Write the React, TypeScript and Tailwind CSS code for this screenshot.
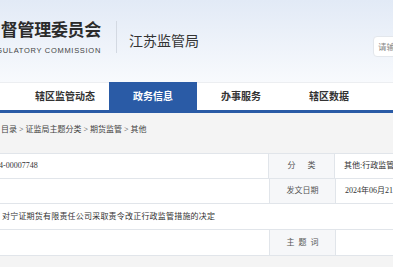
const cjk = "font-['Liberation_Serif','Noto_Sans_CJK_SC',serif]";

const navItems = [
  { label: '辖区监管动态', active: false },
  { label: '政务信息', active: true },
  { label: '办事服务', active: false },
  { label: '辖区数据', active: false },
];

export default function App() {
  return (
    <div className="w-[393px] h-[267px] overflow-hidden bg-[#f4f4f4] text-[#333] font-['Noto_Sans_CJK_SC',sans-serif]">
      {/* Header */}
      <div className="h-[82px] flex items-start bg-gradient-to-b from-[#e2eaf6] to-[#f8fafd] overflow-hidden">
        <div className="w-[101px] shrink-0 flex flex-col items-end pt-[19px]">
          <div className="text-[17px] leading-[20px] font-bold tracking-[-0.3px] whitespace-nowrap text-[#2b2b2b]">督管理委员会</div>
          <div className="mt-[8px] text-[7.5px] leading-[8px] tracking-[0.7px] whitespace-nowrap text-[#444] font-['Liberation_Sans',sans-serif]">REGULATORY COMMISSION</div>
        </div>
        <div className="ml-[15px] mt-[21px] w-px h-[32px] bg-[#d3d9e2] shrink-0" />
        <div className="ml-[12px] mt-[31px] text-[14px] leading-[18px] whitespace-nowrap text-[#333]">江苏监管局</div>
        <div className="ml-[174px] mt-[36px] h-[21px] w-[80px] shrink-0 rounded-[4px] border border-[#e3e7ec] bg-white pl-[4px] flex items-center text-[8.5px] text-[#888] whitespace-nowrap">
          请输入关键字
        </div>
      </div>

      {/* Nav */}
      <div className="h-[31px] bg-white border-t border-[#eceef1] border-b-[3px] border-b-[#2a5ba6] flex pl-[21px]">
        {navItems.map((item) => (
          <div
            key={item.label}
            className={
              item.active
                ? `w-[88px] -mt-px shrink-0 flex items-center justify-center bg-[#2a5ba6] text-white text-[10px] font-bold ${cjk}`
                : `w-[88px] shrink-0 flex items-center justify-center text-[#333] text-[10px] font-bold ${cjk}`
            }
          >
            {item.label}
          </div>
        ))}
      </div>

      {/* Breadcrumb */}
      <div className={`h-[34px] flex items-center pl-[1px] text-[8px] text-[#444] whitespace-nowrap ${cjk}`}>
        目录 &gt; 证监局主题分类 &gt; 期货监管 &gt; 其他
      </div>

      {/* Info table */}
      <div className={`mt-[6px] bg-white border-t border-[#e1e5ea] text-[8px] text-[#333] ${cjk}`}>
        <div className="h-[25px] flex border-b border-[#e1e5ea]">
          <div className="w-[269px] shrink-0 flex items-center -ml-[1px] whitespace-nowrap">4-00007748</div>
          <div className="w-[67px] shrink-0 flex items-center justify-center bg-[#f6f7f9] border-x border-[#e1e5ea] text-[#555] whitespace-pre">分      类</div>
          <div className="flex-1 flex items-center pl-[9px] whitespace-nowrap overflow-hidden">其他:行政监管措施</div>
        </div>
        <div className="h-[25px] flex border-b border-[#e1e5ea]">
          <div className="w-[269px] shrink-0" />
          <div className="w-[67px] shrink-0 flex items-center justify-center bg-[#f6f7f9] border-x border-[#e1e5ea] text-[#555]">发文日期</div>
          <div className="flex-1 flex items-center pl-[9px] whitespace-nowrap overflow-hidden">2024年06月21日</div>
        </div>
        <div className="h-[26px] flex items-center pl-[2px] border-b border-[#e1e5ea] whitespace-nowrap tracking-[0.2px]">
          对宁证期货有限责任公司采取责令改正行政监管措施的决定
        </div>
        <div className="h-[26px] flex border-b border-[#e1e5ea]">
          <div className="w-[269px] shrink-0" />
          <div className="w-[67px] shrink-0 flex items-center justify-center bg-[#f6f7f9] border-x border-[#e1e5ea] text-[#555] whitespace-pre">主  题  词</div>
          <div className="flex-1" />
        </div>
      </div>
    </div>
  );
}
